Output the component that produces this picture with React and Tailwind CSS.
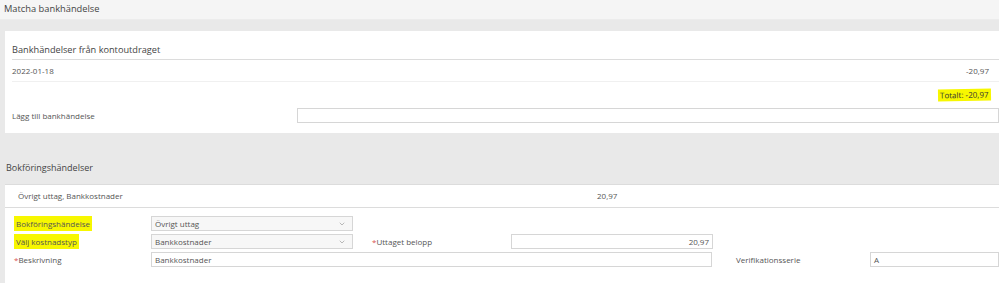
import { FiChevronDown } from "react-icons/fi";

const font = { fontFamily: '"Open Sans", "Noto Sans", sans-serif' }

const Select = ({ value, className }) => (
    <div className={`flex items-center justify-between h-[15px] border border-[#d6d6d6] bg-[#f7f7f7] pl-[3px] pr-[6px] ${className}`}>
        <span>{value}</span>
        <FiChevronDown className="text-[#999] text-[8px]" />
    </div>
)

const Input = ({ value, className }) => (
    <div className={`flex items-center h-[15px] border border-[#d6d6d6] bg-white px-[3px] ${className}`}>
        {value}
    </div>
)

const App = () => {
    return (
    <div className="w-[999px] h-[283px] overflow-hidden bg-[#e9e9e9] text-[#555] text-[8px]" style={font}>
        <div className="h-[20px] bg-[#f5f5f5] border-b border-[#ececec] pl-[4px] pt-[2px] text-[9.3px] text-[#444]">
            Matcha bankhändelse
        </div>

        <div className="ml-[5px] mt-[11px] h-[102px] bg-white pl-[7px] pt-[11px]">
            <div className="text-[9.2px] text-[#444] pb-[2px] border-b border-[#dcdcdc] leading-[15px]">
                Bankhändelser från kontoutdraget
            </div>
            <div className="flex justify-between items-center h-[22px] border-b border-[#f0f0f0] pr-[10px]">
                <span>2022-01-18</span>
                <span>-20,97</span>
            </div>
            <div className="flex justify-end pt-[7px] pr-[8px] h-[26px]">
                <span className="bg-[#f7f700] text-[#333] px-[2px] h-[12px] leading-[12px] -rotate-[1deg]">Totalt: -20,97</span>
            </div>
            <div className="flex items-center">
                <span className="w-[285px]">Lägg till bankhändelse</span>
                <Input value="" className="flex-1" />
            </div>
        </div>

        <div className="pl-[6px] pt-[28px] h-[51px] text-[9px] text-[#444]">
            Bokföringshändelser
        </div>

        <div className="ml-[5px] bg-white border-t border-[#dcdcdc] h-[99px]">
            <div className="flex items-center h-[23px] border-b border-[#dcdcdc] pl-[13px]">
                <span className="w-[579px]">Övrigt uttag, Bankkostnader</span>
                <span>20,97</span>
            </div>
            <div className="flex flex-col gap-[3px] pt-[8px] pl-[9px]">
                <div className="flex items-center">
                    <span className="w-[137px]">
                        <span className="bg-[#f7f700] px-[2px] py-[2px]">Bokföringshändelse</span>
                    </span>
                    <Select value="Övrigt uttag" className="w-[202px]" />
                </div>
                <div className="flex items-center">
                    <span className="w-[137px]">
                        <span className="bg-[#f7f700] px-[2px] py-[2px]">Välj kostnadstyp</span>
                    </span>
                    <Select value="Bankkostnader" className="w-[202px]" />
                    <span className="w-[158px] pl-[19px]"><span className="text-[#d9534f]">*</span>Uttaget belopp</span>
                    <Input value="20,97" className="w-[202px] justify-end" />
                </div>
                <div className="flex items-center">
                    <span className="w-[137px]"><span className="text-[#d9534f]">*</span>Beskrivning</span>
                    <Input value="Bankkostnader" className="w-[561px]" />
                    <span className="w-[158px] pl-[24px]">Verifikationsserie</span>
                    <Input value="A" className="flex-1" />
                </div>
            </div>
        </div>
    </div>
    )
}

export default App
